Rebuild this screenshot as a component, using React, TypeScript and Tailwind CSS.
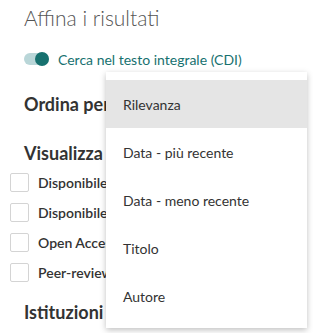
import React from "react";

const filters = ["Disponibile online", "Disponibile in biblioteca", "Open Access", "Peer-reviewed"];
const sortOptions = ["Rilevanza", "Data - più recente", "Data - meno recente", "Titolo", "Autore"];

const Checkbox = ({ label }: { label: string }) => (
  <label className="flex items-center h-[30px] gap-[9px] pl-[10px]">
    <span className="w-[19px] h-[19px] rounded-[2px] border border-[#d4d4d4] bg-white shrink-0" />
    <span className="text-[14px] font-semibold text-[#333] whitespace-nowrap">{label}</span>
  </label>
);

export default function App() {
  return (
    <div className="relative w-[313px] h-[333px] overflow-hidden bg-white font-['Lato','Liberation_Sans',sans-serif]">
      <div className="flex flex-col">
        <h2 className="pl-[24px] pt-[4px] text-[21px] leading-[28px] font-light text-[#555]">Affina i risultati</h2>

        <div className="flex items-center gap-[9px] pl-[24px] mt-[17px] h-[20px]">
          <div className="relative w-[25px] h-[12px] rounded-full bg-[#b9d6d8]">
            <span className="absolute right-0 top-[-1px] w-[14px] h-[14px] rounded-full bg-[#17716f]" />
          </div>
          <span className="text-[14px] text-[#17716f]">Cerca nel testo integrale (CDI)</span>
        </div>

        <h3 className="pl-[24px] mt-[23px] text-[18px] leading-[24px] font-bold text-[#333]">Ordina per</h3>

        <h3 className="pl-[24px] mt-[25px] text-[18px] leading-[24px] font-bold text-[#333] whitespace-nowrap">Visualizza solo</h3>
        <div className="flex flex-col mt-[2px]">
          {filters.map((f) => (
            <Checkbox key={f} label={f} />
          ))}
        </div>

        <h3 className="pl-[24px] mt-[13px] text-[18px] leading-[24px] font-bold text-[#333]">Istituzioni</h3>
        <div className="flex flex-col mt-[3px]">
          <Checkbox label="Biblioteca" />
        </div>
      </div>

      <ul className="absolute left-[106px] top-[72px] w-[201px] py-[8px] bg-white shadow-[0_2px_6px_rgba(0,0,0,0.25)]">
        {sortOptions.map((o, i) => (
          <li
            key={o}
            className={`h-[48px] flex items-center pl-[17px] text-[14px] text-[#333] ${i === 0 ? "bg-[#e5e5e5]" : ""}`}
          >
            {o}
          </li>
        ))}
      </ul>
    </div>
  );
}
